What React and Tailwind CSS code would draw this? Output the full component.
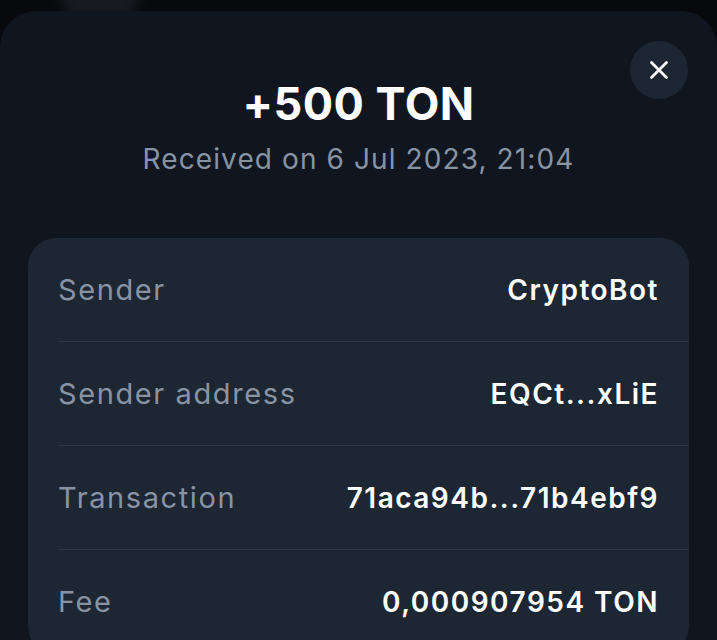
import { X } from "lucide-react";

const rows = [
  { label: "Sender", value: "CryptoBot" },
  { label: "Sender address", value: "EQCt...xLiE" },
  { label: "Transaction", value: "71aca94b...71b4ebf9" },
  { label: "Fee", value: "0,000907954 TON" },
];

export default function App() {
  return (
    <div
      className="relative h-[640px] w-[717px] overflow-hidden bg-[#07090c] pt-[11px]"
      style={{ fontFamily: "Inter, 'Noto Sans', sans-serif" }}
    >
      {/* faint blurred content behind the sheet */}
      <div className="absolute left-[62px] top-[-20px] h-[40px] w-[76px] rounded-full bg-[#171b21] blur-[6px]" />

      <div className="relative h-full rounded-t-[36px] bg-[#10161f] px-[28px]">
        <button className="absolute right-[29px] top-[30px] flex h-[58px] w-[58px] items-center justify-center rounded-full bg-[#1d2633] text-white">
          <X size={30} strokeWidth={2.2} />
        </button>

        <div className="flex flex-col items-center pt-[66px]">
          <h1 className="text-[45px] font-bold leading-[54px] tracking-[0.5px] text-white">
            +500 TON
          </h1>
          <p className="mt-[10px] text-[28px] leading-[36px] tracking-[1.1px] text-[#8994a3]">
            Received on 6 Jul 2023, 21:04
          </p>
        </div>

        <div className="mt-[61px] overflow-hidden rounded-[28px] bg-[#1d2633]">
          {rows.map((row, i) => (
            <div key={row.label} className="pl-[30px]">
              <div
                className={`flex h-[104px] items-center justify-between pr-[30px] ${
                  i < rows.length - 1 ? "border-b border-[#2c3643]" : ""
                }`}
              >
                <span className="text-[29px] tracking-[1.6px] text-[#8994a3]">{row.label}</span>
                <span className="text-[28px] font-semibold tracking-[1.5px] text-white">
                  {row.value}
                </span>
              </div>
            </div>
          ))}
        </div>
      </div>
    </div>
  );
}
